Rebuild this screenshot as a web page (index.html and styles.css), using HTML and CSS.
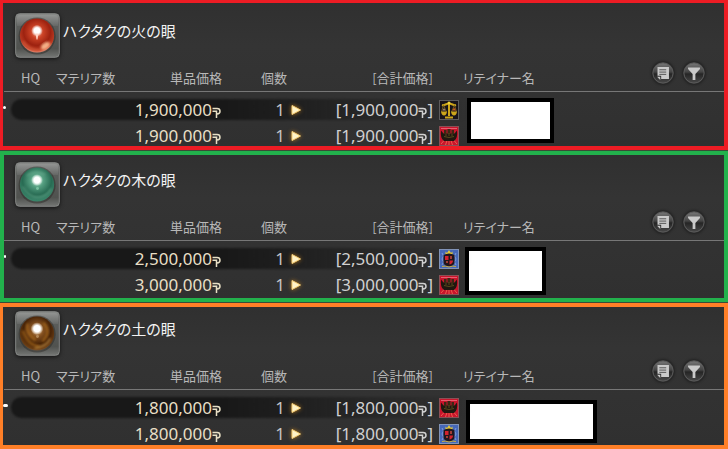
FILE: index.html
```html
<!DOCTYPE html>
<html lang="ja">
<head>
<meta charset="utf-8">
<title>マーケット</title>
<link rel="stylesheet" href="styles.css">
</head>
<body>
<svg class="defs" aria-hidden="true">
  <defs>
    <linearGradient id="frame" x1="0" y1="0" x2="0" y2="1">
      <stop offset="0" stop-color="#8b8d8b"/><stop offset=".25" stop-color="#5b5d5b"/><stop offset=".8" stop-color="#50524f"/><stop offset="1" stop-color="#747674"/>
    </linearGradient>
    <radialGradient id="fire" cx=".5" cy=".4" r=".6">
      <stop offset="0" stop-color="#f0a48c"/><stop offset=".3" stop-color="#cb4226"/><stop offset=".65" stop-color="#9d2210"/><stop offset=".88" stop-color="#bb3a22"/><stop offset="1" stop-color="#ef927c"/>
    </radialGradient>
    <radialGradient id="wood" cx=".5" cy=".38" r=".65">
      <stop offset="0" stop-color="#c4f0d8"/><stop offset=".3" stop-color="#549e80"/><stop offset=".65" stop-color="#286b53"/><stop offset="1" stop-color="#3f8c70"/>
    </radialGradient>
    <radialGradient id="earth" cx=".5" cy=".4" r=".62">
      <stop offset="0" stop-color="#dfb27c"/><stop offset=".3" stop-color="#84501f"/><stop offset=".65" stop-color="#482408"/><stop offset=".9" stop-color="#6b3e14"/><stop offset="1" stop-color="#775f49"/>
    </radialGradient>
    <radialGradient id="glow"><stop offset="0" stop-color="#fff"/><stop offset=".5" stop-color="#fff"/><stop offset="1" stop-color="#fff" stop-opacity="0"/></radialGradient>
    <linearGradient id="round" x1="0" y1="0" x2="0" y2="1">
      <stop offset="0" stop-color="#777"/><stop offset=".45" stop-color="#444"/><stop offset=".55" stop-color="#252525"/><stop offset="1" stop-color="#484848"/>
    </linearGradient>
    <filter id="soft"><feGaussianBlur stdDeviation="1"/></filter>
    <symbol id="tile" viewBox="0 0 46 46">
      <rect x=".7" y=".7" width="44.6" height="44.6" rx="4" fill="url(#frame)" stroke="#858785" stroke-width="1"/>
      <path d="M2 5q0-3 3-3h36q3 0 3 3v8H2z" fill="#fff" opacity=".1"/>
      <circle cx="22.6" cy="23.5" r="19" fill="#292522" opacity=".45"/>
    </symbol>
    <symbol id="gil" viewBox="0 0 9 14">
      <path d="M.5 3.500H5Q8 3.500 8 6.200T5 9H4M.5 6.200h4V13" fill="none" stroke="currentColor" stroke-width="1.500"/>
    </symbol>
    <symbol id="arrow" viewBox="0 0 16 16">
      <path d="M4 3.500 12.500 8 4 12.500z" fill="#fff3c9" stroke="#f7cf76" stroke-linejoin="round"/>
    </symbol>
    <symbol id="list" viewBox="0 0 24 24">
      <circle cx="12" cy="12" r="11" fill="url(#round)" stroke="#5e5e5e"/>
      <path d="M6 5.500h12.500V18.500H10V15H6z" fill="#c9c9c9"/>
      <path d="M8 8.500h7.500M8 11h7.500M8 13.500h7.500" stroke="#4d4d4d" stroke-width="1"/>
      <path d="M5.500 16H9v3.500z" fill="#c9c9c9"/>
    </symbol>
    <symbol id="filter" viewBox="0 0 24 24">
      <circle cx="12" cy="12" r="11" fill="url(#round)" stroke="#5e5e5e"/>
      <path d="M5.500 6h13v1.500L13.500 13v6.500h-3V13l-5-5.500z" fill="#c9c9c9"/>
    </symbol>
    <symbol id="scales" viewBox="0 0 20 20">
      <rect x=".5" y=".5" width="19" height="19" fill="#18131a" stroke="#5d5b5c"/>
      <path d="M10 2v14M6 17.500h8M3 5c3 1 4-2 7-1 3-1 4 2 7 1" fill="none" stroke="#cda51b" stroke-width="2"/>
      <path d="M4.500 5 2.500 12M4.500 5l3 7M15.500 5l-3 7M15.500 5l2 7" stroke="#87691b" stroke-width=".8"/>
      <path d="M2 11.500h6q-.5 4-3 4t-3-4zM12 11.500h6q-.5 4-3 4t-3-4z" fill="#cda51b"/>
      <path d="M3.500 10.500 5 8l1.500 2.500z" fill="#a78978"/><path d="M13.500 10.500 15 7.500l2 3z" fill="#c95b22"/>
      <circle cx="10" cy="3" r="1.500" fill="#f1d43c"/>
    </symbol>
    <symbol id="ship" viewBox="0 0 20 20">
      <rect x=".5" y=".5" width="19" height="19" fill="#c9152c" stroke="#8a5055"/>
      <path d="M2 2.500h16" stroke="#ef7180" stroke-width=".8"/>
      <path d="M5.500 14 2 18M8 14.500 6.500 19M10 14v5M12 14.500l1.500 4.500M14.500 14l3.500 4" stroke="#ee6650" stroke-width=".9"/>
      <path d="M2 4.500 4.500 7.500h11L18 4.500q1 8-3 10.500H5Q1 12.500 2 4.500z" fill="#211710"/>
      <path d="M5 4h2.500v4H5zM8.500 3h3v5h-3zM12.500 4H15v4h-2.500z" fill="#3b2814"/>
      <path d="M5 10.500q5 2 10 0M7 8v2M10 7v3M13 8v2" fill="none" stroke="#70631f" stroke-width=".7"/>
    </symbol>
    <symbol id="shield" viewBox="0 0 20 20">
      <rect x=".5" y=".5" width="19" height="19" fill="#4668b8" stroke="#8193b7"/>
      <path d="M3 4l1.500 3L3 10l1.500 3L3 16M17 4l-1.500 3L17 10l-1.500 3 1.500 3" fill="none" stroke="#86a2dc" stroke-width=".9"/>
      <path d="M6.500 2.500 8 4l2-3 2 3 1.500-1.500v3h-7z" fill="#e5c936"/>
      <path d="M4.500 6q5.500-3 11 0v8q-1 3-5.500 3.500Q5.500 17 4.500 14z" fill="#21171e"/>
      <path d="M6 7h3.500v4H6zM10.500 11.500H14q0 3-3.500 4z" fill="#d3222c"/><path d="M11 7h2v3h-2zM7 12h2v2H7z" fill="#a13b33"/>
      <path d="M3 17.500q3-1 7 .500 4-1.500 7-.5" fill="none" stroke="#c9ac40" stroke-width="1"/>
    </symbol>
  </defs>
</svg>

<main class="market">
  <section class="panel panel-fire">
    <header class="item">
      <svg class="item-icon" viewBox="0 0 46 46" aria-hidden="true">
        <use href="#tile"/><circle cx="22.500" cy="23" r="17.500" fill="url(#fire)"/>
        <path d="M8 29q6 9 15 9 10 0 13-8" fill="none" stroke="#e26c48" stroke-width="2" opacity=".6" filter="url(#soft)"/>
        <ellipse cx="31" cy="33.500" rx="5" ry="3" fill="#ffc599" opacity=".85" transform="rotate(-35 31 33.500)" filter="url(#soft)"/>
        <circle cx="22.500" cy="18" r="6" fill="url(#glow)"/><path d="M21 21h3l-1 6h-1z" fill="#ffd5c7"/>
      </svg>
      <h2 class="item-name">ハクタクの火の眼</h2>
    </header>
    <table class="listing">
      <colgroup><col class="c-hq"><col class="c-materia"><col class="c-price"><col class="c-qty"><col class="c-arrow"><col class="c-total"><col class="c-crest"><col></colgroup>
      <thead><tr>
        <th class="hq">HQ</th><th class="materia">マテリア数</th><th class="num">単品価格</th><th class="num">個数</th><th></th><th class="num">[合計価格]</th><th></th>
        <th><div class="tools"><span>リテイナー名</span><button type="button" aria-label="履歴"><svg><use href="#list"/></svg></button><button type="button" aria-label="絞り込み"><svg><use href="#filter"/></svg></button></div></th>
      </tr></thead>
      <tbody>
        <tr class="selected"><td><span class="highlight"></span><span class="pointer"></span></td><td></td><td class="num price">1,900,000<svg class="gil"><use href="#gil"/></svg></td><td class="num qty">1</td><td class="arrow"><svg><use href="#arrow"/></svg></td><td class="num total">[1,900,000<svg class="gil"><use href="#gil"/></svg>]</td><td class="crest"><svg><use href="#scales"/></svg></td><td class="retainer" rowspan="2"><div class="mask"></div></td></tr>
        <tr><td></td><td></td><td class="num price">1,900,000<svg class="gil"><use href="#gil"/></svg></td><td class="num qty">1</td><td class="arrow"><svg><use href="#arrow"/></svg></td><td class="num total">[1,900,000<svg class="gil"><use href="#gil"/></svg>]</td><td class="crest"><svg><use href="#ship"/></svg></td></tr>
      </tbody>
    </table>
  </section>

  <section class="panel panel-wood">
    <header class="item">
      <svg class="item-icon" viewBox="0 0 46 46" aria-hidden="true">
        <use href="#tile"/><circle cx="22.500" cy="23" r="17.500" fill="url(#wood)"/>
        <path d="M8 25q7 11 15 11 9 0 14-9M12 14q8-6 19-1" fill="none" stroke="#79b99c" stroke-width="2" opacity=".4" filter="url(#soft)"/>
        <circle cx="22.500" cy="18.500" r="6" fill="url(#glow)"/><circle cx="23" cy="27" r="1.500" fill="#8bd4b1" opacity=".7"/>
      </svg>
      <h2 class="item-name">ハクタクの木の眼</h2>
    </header>
    <table class="listing">
      <colgroup><col class="c-hq"><col class="c-materia"><col class="c-price"><col class="c-qty"><col class="c-arrow"><col class="c-total"><col class="c-crest"><col></colgroup>
      <thead><tr>
        <th class="hq">HQ</th><th class="materia">マテリア数</th><th class="num">単品価格</th><th class="num">個数</th><th></th><th class="num">[合計価格]</th><th></th>
        <th><div class="tools"><span>リテイナー名</span><button type="button" aria-label="履歴"><svg><use href="#list"/></svg></button><button type="button" aria-label="絞り込み"><svg><use href="#filter"/></svg></button></div></th>
      </tr></thead>
      <tbody>
        <tr class="selected"><td><span class="highlight"></span><span class="pointer"></span></td><td></td><td class="num price">2,500,000<svg class="gil"><use href="#gil"/></svg></td><td class="num qty">1</td><td class="arrow"><svg><use href="#arrow"/></svg></td><td class="num total">[2,500,000<svg class="gil"><use href="#gil"/></svg>]</td><td class="crest"><svg><use href="#shield"/></svg></td><td class="retainer" rowspan="2"><div class="mask"></div></td></tr>
        <tr><td></td><td></td><td class="num price">3,000,000<svg class="gil"><use href="#gil"/></svg></td><td class="num qty">1</td><td class="arrow"><svg><use href="#arrow"/></svg></td><td class="num total">[3,000,000<svg class="gil"><use href="#gil"/></svg>]</td><td class="crest"><svg><use href="#ship"/></svg></td></tr>
      </tbody>
    </table>
  </section>

  <section class="panel panel-earth">
    <header class="item">
      <svg class="item-icon" viewBox="0 0 46 46" aria-hidden="true">
        <use href="#tile"/><circle cx="22.500" cy="23" r="17.500" fill="url(#earth)"/>
        <path d="M8 20q5 15 17 16M13 13q-3 9 8 17M29 12q9 10-1 19" fill="none" stroke="#b8741f" stroke-width="2.500" opacity=".6" filter="url(#soft)"/>
        <path d="M20 38q12-1 16-10" fill="none" stroke="#cf9c4e" stroke-width="2" opacity=".6" filter="url(#soft)"/>
        <circle cx="22.500" cy="18" r="6.500" fill="url(#glow)"/><circle cx="23" cy="26" r="1.500" fill="#c7a374" opacity=".7"/>
      </svg>
      <h2 class="item-name">ハクタクの土の眼</h2>
    </header>
    <table class="listing">
      <colgroup><col class="c-hq"><col class="c-materia"><col class="c-price"><col class="c-qty"><col class="c-arrow"><col class="c-total"><col class="c-crest"><col></colgroup>
      <thead><tr>
        <th class="hq">HQ</th><th class="materia">マテリア数</th><th class="num">単品価格</th><th class="num">個数</th><th></th><th class="num">[合計価格]</th><th></th>
        <th><div class="tools"><span>リテイナー名</span><button type="button" aria-label="履歴"><svg><use href="#list"/></svg></button><button type="button" aria-label="絞り込み"><svg><use href="#filter"/></svg></button></div></th>
      </tr></thead>
      <tbody>
        <tr class="selected"><td><span class="highlight"></span><span class="pointer"></span></td><td></td><td class="num price">1,800,000<svg class="gil"><use href="#gil"/></svg></td><td class="num qty">1</td><td class="arrow"><svg><use href="#arrow"/></svg></td><td class="num total">[1,800,000<svg class="gil"><use href="#gil"/></svg>]</td><td class="crest"><svg><use href="#ship"/></svg></td><td class="retainer" rowspan="2"><div class="mask"></div></td></tr>
        <tr><td></td><td></td><td class="num price">1,800,000<svg class="gil"><use href="#gil"/></svg></td><td class="num qty">1</td><td class="arrow"><svg><use href="#arrow"/></svg></td><td class="num total">[1,800,000<svg class="gil"><use href="#gil"/></svg>]</td><td class="crest"><svg><use href="#shield"/></svg></td></tr>
      </tbody>
    </table>
  </section>
</main>
</body>
</html>
```
FILE: styles.css
```css
* { box-sizing: border-box; }

body {
  margin: 0;
  background: #3c4a38;
  color: #c4c4c4;
  font-family: "Noto Sans", "Noto Sans CJK JP", sans-serif;
}

.defs { position: absolute; width: 0; height: 0; }

.market { display: flex; flex-direction: column; gap: 1px; }

.panel {
  border: 4px solid;
  background: linear-gradient(#303030, #343434 30%, #303030);
}
.panel-fire { border-color: #ed1c24; border-width: 3px 4px 4px 3px; padding: 10px 0 0 1px; }
.panel-wood { border-color: #22b14c; padding: 7px 0 3px; }
.panel-earth { border-color: #ff7f27; border-left-width: 3px; padding: 4px 0 1px 1px; }

.item { display: flex; align-items: flex-start; gap: 3px; height: 45px; padding-left: 11px; }
.item-icon { width: 45px; height: 45px; filter: drop-shadow(0 1px 2px #111); }
.item-name {
  margin: 0;
  padding-top: 6px;
  color: #f2f2f2;
  font: 400 15px/24px "Noto Sans CJK JP", sans-serif;
  font-feature-settings: "palt";
}

.listing { width: 100%; table-layout: fixed; border-collapse: separate; border-spacing: 0; }
.c-hq { width: 42px; }
.c-materia { width: 70px; }
.c-price { width: 106px; }
.c-qty { width: 65px; }
.c-arrow { width: 20px; }
.c-total { width: 126px; }
.c-crest { width: 27px; }

th, td { padding: 0; text-align: left; white-space: nowrap; }
th {
  height: 34px;
  padding-bottom: 3px;
  border-bottom: 1px solid #777;
  color: #b8b8b8;
  font: 400 13px/20px "Noto Sans CJK JP", sans-serif;
  font-feature-settings: "palt";
  vertical-align: bottom;
}
.hq { padding-left: 17px; }
.materia { padding-left: 10px; }
.num { text-align: right; }

.tools { display: flex; align-items: flex-end; gap: 9px; padding: 0 19px 0 3px; }
.tools span { margin-right: auto; }
.tools button { width: 22px; height: 22px; margin-bottom: 4px; padding: 0; border: 0; border-radius: 50%; background: none; box-shadow: 0 0 3px #111; }
.tools svg { display: block; width: 22px; height: 22px; }

td { padding-top: 3px; font-size: 17px; line-height: 20px; vertical-align: top; }
.selected { position: relative; }
.selected td { padding-top: 8px; padding-bottom: 3px; }
.price, .total, .qty, .arrow, .crest { position: relative; }
.price { padding-right: 1px; color: #e8dfc5; }
.total { color: #d0d0d0; }
.qty { padding-right: 2px; }
.gil { width: 9px; height: 14px; vertical-align: -3px; }
.arrow svg { display: block; width: 16px; height: 20px; margin-left: 1px; filter: drop-shadow(0 0 2px #b8791c); }
.crest svg { display: block; width: 20px; height: 20px; margin-left: 6px; }

.highlight {
  position: absolute;
  top: 7px;
  left: 7px;
  width: 64%;
  height: 21px;
  border-radius: 10px;
  background: linear-gradient(90deg, #181818 45%, transparent);
  filter: blur(1px);
}
.pointer { position: absolute; top: 14px; left: -1px; width: 3px; height: 3px; border-radius: 2px; background: #fff; }
.panel-wood .pointer { left: 0; width: 2px; }
.panel-earth .pointer { width: 5px; }

.listing .retainer { padding: 6px 0 0 7px; }
.mask { width: 87px; height: 45px; border: 4px solid #000; background: #fff; }
.panel-wood .mask { width: 81px; height: 48px; }
.panel-earth .retainer { padding-top: 10px; padding-left: 6px; }
.panel-earth .mask { width: 131px; height: 43px; }
.panel-wood .retainer { padding-left: 5px; }
```
